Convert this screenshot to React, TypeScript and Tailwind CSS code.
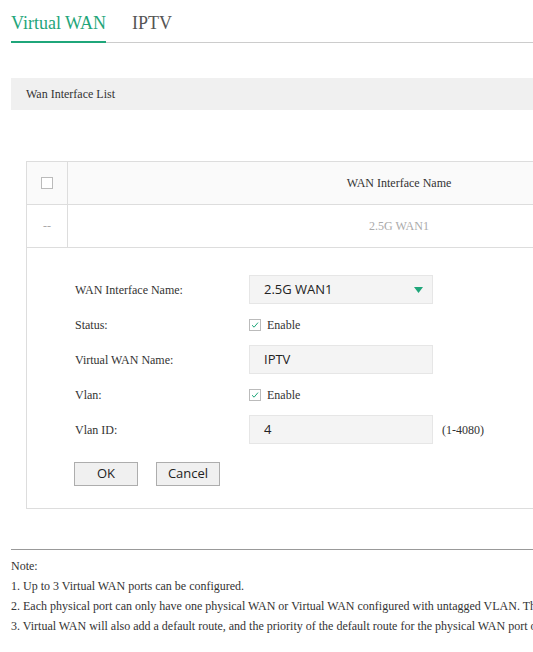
const serif = "font-['Liberation_Serif','Times_New_Roman',serif]";
const sans = "font-['Open_Sans','Noto_Sans',sans-serif]";

const CheckBox = ({ checked }: { checked?: boolean }) => (
    <span className="flex h-3 w-3 items-center justify-center border border-[#bbb] bg-white">
        {checked && (
            <svg width="8" height="8" viewBox="0 0 8 8">
                <path d="M1 4.2 L3.1 6.2 L7 1.6" fill="none" stroke="#1fa67a" strokeWidth="1" />
            </svg>
        )}
    </span>
);

const FormRow = ({ label, children }: { label: string; children: React.ReactNode }) => (
    <div className="flex h-[29px] items-center">
        <div className="w-[174px] shrink-0">{label}</div>
        {children}
    </div>
);

const TextBox = ({ value }: { value: string }) => (
    <div className={`flex h-[29px] w-[184px] items-center border border-[#e6e6e6] bg-[#f4f4f4] pl-[14px] text-[13px] text-[#222] ${sans}`}>
        {value}
    </div>
);

const notes = [
    "1. Up to 3 Virtual WAN ports can be configured.",
    "2. Each physical port can only have one physical WAN or Virtual WAN configured with untagged VLAN. The other WAN ports must be tagged.",
    "3. Virtual WAN will also add a default route, and the priority of the default route for the physical WAN port over the Virtual WAN.",
];

const App = () => {
    return (
        <div className={`h-[652px] w-[533px] overflow-hidden bg-white text-[12px] text-[#333] ${serif}`}>
            <div className="ml-[11px] w-[735px]">
                {/* tabs */}
                <div className="flex h-[43px] items-end gap-[26px] border-b border-[#ccc] text-[18px]">
                    <div className="-mb-px border-b-2 border-[#1fa67a] pb-[4px] text-[#1fa67a]">Virtual WAN</div>
                    <div className="pb-[5px] text-[#555]">IPTV</div>
                </div>

                <div className="mt-[35px] flex h-[32px] items-center bg-[#f0f0f0] pl-[15px]">Wan Interface List</div>

                {/* table */}
                <div className="mx-[15px] mt-[51px] border-l border-t border-r border-[#ddd]">
                    <div className="flex h-[43px] border-b border-[#ddd] bg-[#fafafa]">
                        <div className="flex w-[41px] items-center justify-center border-r border-[#ddd]">
                            <CheckBox />
                        </div>
                        <div className="flex flex-1 items-center justify-center">WAN Interface Name</div>
                    </div>
                    <div className="flex h-[43px] border-b border-[#ddd] text-[#aaa]">
                        <div className="flex w-[41px] items-center justify-center border-r border-[#ddd]">--</div>
                        <div className="flex flex-1 items-center justify-center">2.5G WAN1</div>
                    </div>

                    {/* edit form */}
                    <div className="flex flex-col gap-[6px] border-b border-[#ddd] pb-[22px] pl-[48px] pt-[27px]">
                        <FormRow label="WAN Interface Name:">
                            <div className={`flex h-[29px] w-[184px] items-center justify-between border border-[#e6e6e6] bg-[#f4f4f4] pl-[14px] pr-[9px] text-[13px] text-[#222] ${sans}`}>
                                2.5G WAN1
                                <svg width="9" height="6" viewBox="0 0 9 6">
                                    <path d="M0 0 H9 L4.5 6 Z" fill="#1fa67a" />
                                </svg>
                            </div>
                        </FormRow>
                        <FormRow label="Status:">
                            <div className="flex items-center gap-[6px]">
                                <CheckBox checked />
                                <span>Enable</span>
                            </div>
                        </FormRow>
                        <FormRow label="Virtual WAN Name:">
                            <TextBox value="IPTV" />
                        </FormRow>
                        <FormRow label="Vlan:">
                            <div className="flex items-center gap-[6px]">
                                <CheckBox checked />
                                <span>Enable</span>
                            </div>
                        </FormRow>
                        <FormRow label="Vlan ID:">
                            <TextBox value="4" />
                            <span className="ml-[9px]">(1-4080)</span>
                        </FormRow>
                        <div className={`-ml-px mt-[12px] flex gap-[18px] text-[13px] text-[#222] ${sans}`}>
                            <button className="h-[24px] w-[64px] border border-[#adadad] bg-[#f0f0f0]">OK</button>
                            <button className="h-[24px] w-[64px] border border-[#adadad] bg-[#f0f0f0]">Cancel</button>
                        </div>
                    </div>
                </div>

                {/* notes */}
                <div className="mt-[40px] border-t border-[#999] pt-[6px] leading-[20px]">
                    <div>Note:</div>
                    {notes.map((n) => (
                        <div key={n} className="whitespace-nowrap">
                            {n}
                        </div>
                    ))}
                </div>
            </div>
        </div>
    );
};

export default App;
